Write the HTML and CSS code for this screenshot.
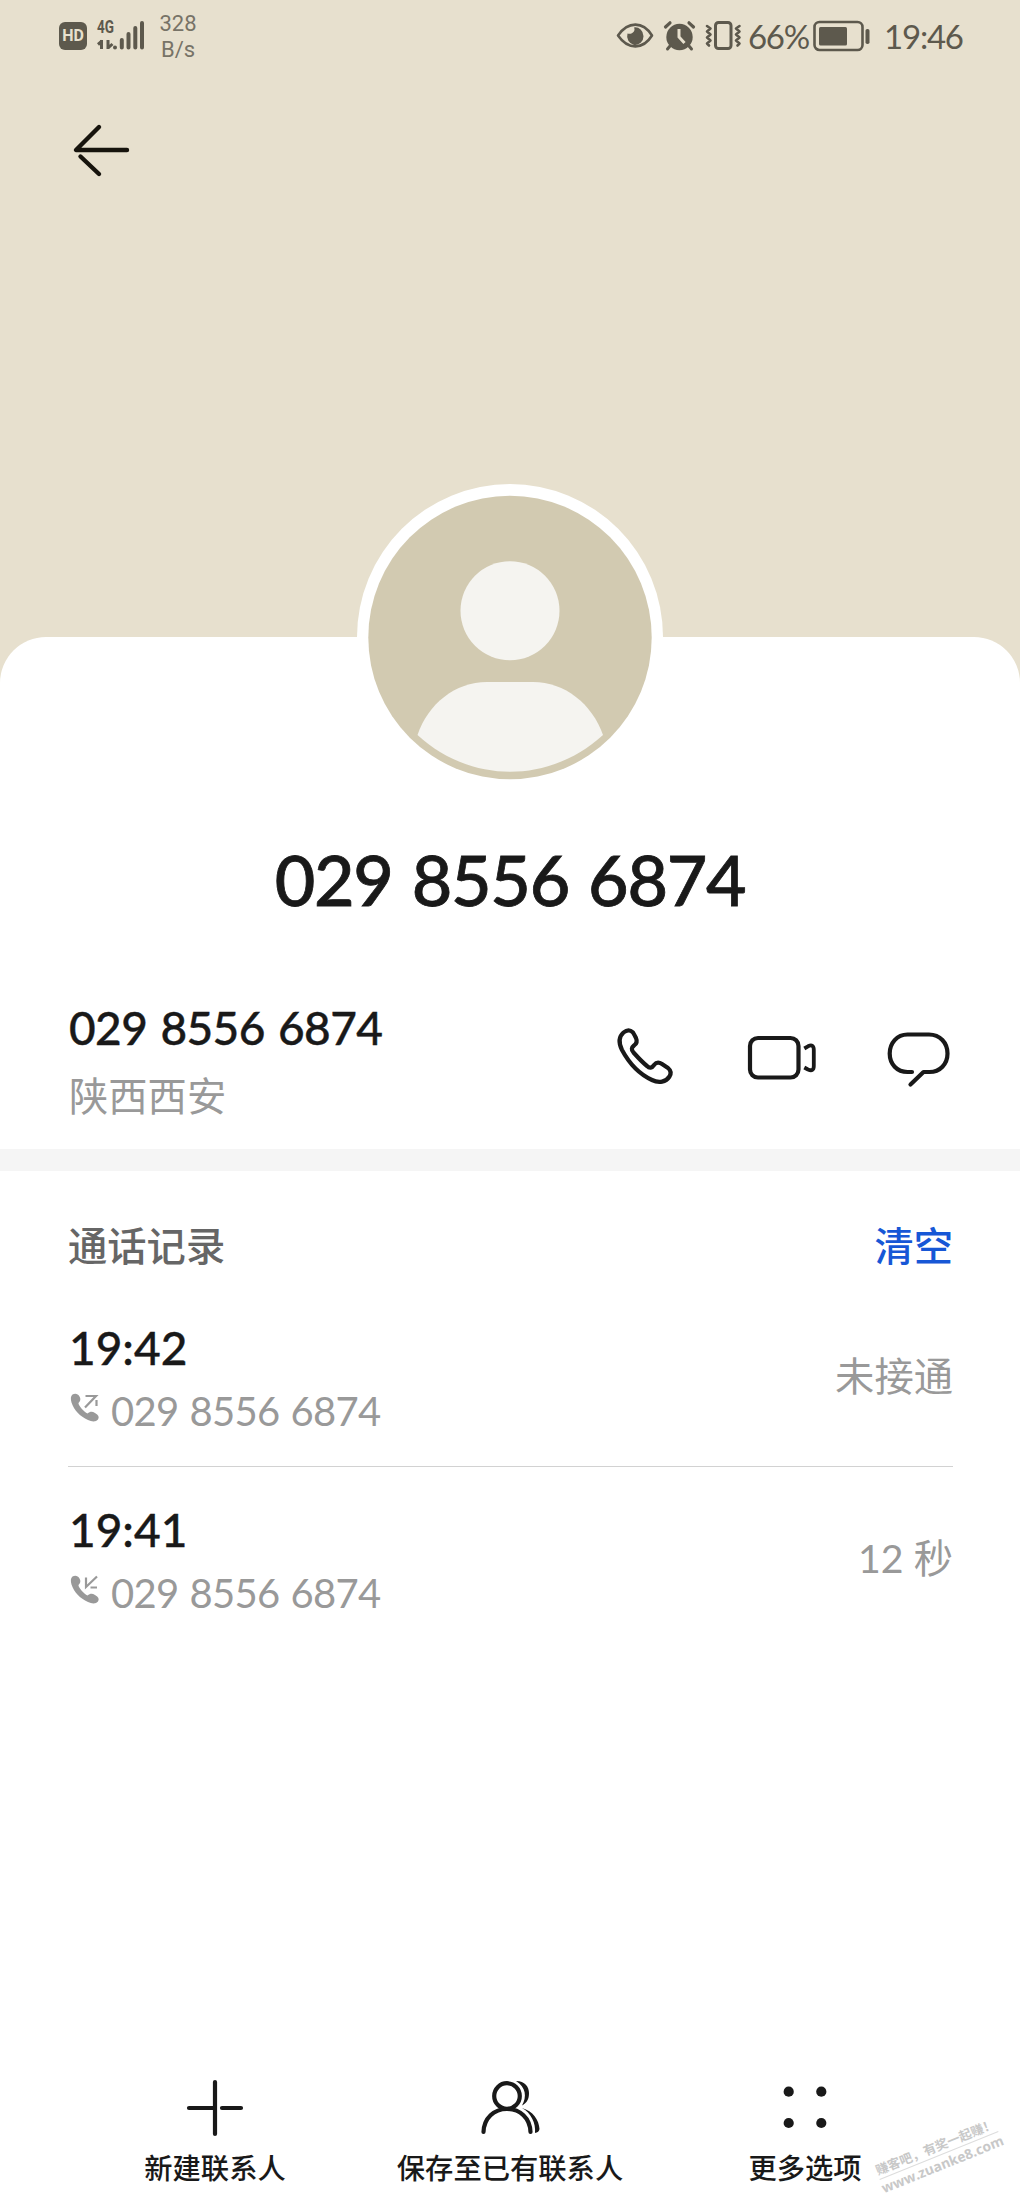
FILE: index.html
```
<!DOCTYPE html>
<html lang="zh-CN">
<head>
<meta charset="utf-8">
<title>029 8556 6874</title>
<link rel="stylesheet" href="styles.css">
</head>
<body>
<div class="screen">
  <header class="hero">
    <div class="status">
      <span class="hd">HD</span>
      <svg class="signal" width="50" height="32" viewBox="0 0 50 32">
        <text x="0" y="14" font-size="18" font-weight="700" textLength="17" lengthAdjust="spacingAndGlyphs">4G</text>
        <path d="M4.500 30V21M5 22L1 25.500M11 30V21M11 29L15.500 25" class="bar thin"/>
        <path d="M18 28.500V28.600M24.800 28.500V21M31.500 28.500V15M38.300 28.500V9M45 28.500V4" class="bar"/>
      </svg>
      <div class="speed"><span>328</span><span>B/s</span></div>
      <svg class="tray" width="126" height="32" viewBox="0 0 126 32">
        <path d="M2 16.500C12 2 27 2 36 16.500C27 31 12 31 2 16.500Z" class="line" stroke-width="2.600"/>
        <path d="M18 8.500C20 12 16 16 11.500 14.500A8.200 8.800 0 1 0 18 8.500Z"/>
        <circle cx="63.500" cy="18" r="13.200"/>
        <path d="M49.500 8L54 3.800M73 3.800L77.500 8" class="line" stroke-width="3.200"/>
        <path d="M54 27L51.500 30M73 27L75.500 30" class="line" stroke-width="3"/>
        <path d="M63 10V18L68.500 24" class="cut"/>
        <rect x="99.500" y="3.500" width="15.500" height="26" rx="3" class="line" stroke-width="3"/>
        <path d="M91 7L94.500 9.500L91 12.500L94.500 15.500L91 18.500L94.500 21.500L91 24.500L93 26.500M123.500 7L120 9.500L123.500 12.500L120 15.500L123.500 18.500L120 21.500L123.500 24.500L121.500 26.500" class="line" stroke-width="2.600"/>
      </svg>
      <span class="pct">66%</span>
      <svg class="battery" width="58" height="32" viewBox="0 0 58 32">
        <rect x="1.500" y="3" width="48" height="28" rx="5" class="line" stroke-width="2.600"/>
        <rect x="6" y="8" width="28" height="18.500" rx="1.500"/>
        <rect x="52.500" y="10" width="4" height="15" rx="1.800"/>
      </svg>
      <span class="clock">19:46</span>
    </div>
    <svg class="back" width="60" height="56" viewBox="0 0 60 56">
      <path d="M26 5L3 28H54M26 52L7.500 34.500"/>
    </svg>
  </header>

  <main class="sheet">
    <svg class="avatar" width="306" height="306" viewBox="0 0 306 306">
      <circle cx="153" cy="153" r="153" fill="#fff"/>
      <circle cx="153" cy="153.500" r="141.700" fill="#d2cab1"/>
      <circle cx="153" cy="126.800" r="49.500" fill="#f5f4f0"/>
      <path d="M60.500 251C71 220 98 198 130 198H176C208 198 235 220 246 251C192 300 114 300 60.500 251Z" fill="#f5f4f0"/>
    </svg>
    <h1 class="title">029 8556 6874</h1>

    <section class="contact">
      <div>
        <div class="number">029 8556 6874</div>
        <div class="place">陕西西安</div>
      </div>
      <div class="actions">
        <svg class="phone" width="60" height="60" viewBox="0 0 60 60">
          <path d="M17 4.500C14 1.500 10.500 2 7.500 4.500C2.500 9 2.500 15 6 22C13 35 23 46 36 52C43 55.500 50 54 53.500 48.500C55.500 45 55 42.500 52 40L46 36C43 34 40 34.500 38 37C36 40 33.500 40.500 31 38C26 34 22 29.500 17.500 24.500C15 21.500 15.500 19.500 18 17.500C21 15.500 21.500 13.500 20 10Q18.500 7 17 4.500Z"/>
        </svg>
        <svg width="72" height="60" viewBox="0 0 72 60">
          <rect x="5" y="8" width="48.500" height="39.500" rx="8"/>
          <path d="M59.300 18.500L63 16.300Q68.800 13.500 68.800 20V36Q68.800 42 63 39.500L59.300 37.500" class="lens"/>
        </svg>
        <svg width="66" height="60" viewBox="0 0 66 60">
          <path d="M26 42H21.500C11 42 3.700 34 3.700 23.500C3.700 13 11 4.500 21.500 4.500H43C54 4.500 61.500 13 61.500 23.500C61.500 34 54 42 43.500 42H37.500L24.500 54.500"/>
        </svg>
      </div>
    </section>

    <section class="log">
      <div class="log-head"><span>通话记录</span><a class="clear">清空</a></div>
      <div class="call">
        <div>
          <div class="time">19:42</div>
          <div class="via">
            <svg width="30" height="30" viewBox="0 0 30 30">
              <path d="M2.500 1.500C5 0 8 .5 9.500 3.500C11 6 10.500 8 8.500 10C8 12 14 19 17.500 20.500C20 18.500 22 18 25 20C28.500 22 29.500 24 28 26.500C26 29 22 29 18 27C10 23.500 4 17 1.500 9.500C.5 6 .5 3 2.500 1.500Z"/>
              <path d="M15.500 3H26L15 14.500M26.500 7V13" class="arrow"/>
            </svg><span>029 8556 6874</span>
          </div>
        </div>
        <div class="result">未接通</div>
      </div>
      <div class="call">
        <div>
          <div class="time">19:41</div>
          <div class="via">
            <svg width="30" height="30" viewBox="0 0 30 30">
              <path d="M2.500 1.500C5 0 8 .5 9.500 3.500C11 6 10.500 8 8.500 10C8 12 14 19 17.500 20.500C20 18.500 22 18 25 20C28.500 22 29.500 24 28 26.500C26 29 22 29 18 27C10 23.500 4 17 1.500 9.500C.5 6 .5 3 2.500 1.500Z"/>
              <path d="M16 2.500V12L27 1.500M20.500 12.500H27" class="arrow"/>
            </svg><span>029 8556 6874</span>
          </div>
        </div>
        <div class="result">12 秒</div>
      </div>
    </section>
  </main>

  <nav class="tools">
    <div class="tool">
      <svg width="60" height="60" viewBox="0 0 60 60"><path d="M30 4V56M4 30H30M37 30H56"/></svg>
      <span>新建联系人</span>
    </div>
    <div class="tool">
      <svg class="people" width="60" height="60" viewBox="0 0 60 60">
        <circle cx="30" cy="18" r="12.800"/>
        <path d="M6.500 54C7 40 17 31 30 31S53 40 53.500 54" />
        <path d="M39 3C48 3 52 9 52 15C52 21 50 25 45 27.500C50 19 49 9 39 3ZM45 30C56 33 62 42 62.500 51Q62 54.500 58 55C59 45 54 35 45 30Z" class="solid"/>
      </svg>
      <span>保存至已有联系人</span>
    </div>
    <div class="tool">
      <svg width="60" height="60" viewBox="0 0 60 60"><g class="solid"><circle cx="13.700" cy="13.700" r="5.100"/><circle cx="46.300" cy="13.700" r="5.100"/><circle cx="13.700" cy="45" r="5.100"/><circle cx="46.300" cy="45" r="5.100"/></g></svg>
      <span>更多选项</span>
    </div>
  </nav>
  <div class="mark"><span class="mark-cn">赚客吧，有奖一起赚！</span><span class="mark-url">www.zuanke8.com</span></div>
</div>
</body>
</html>
```
FILE: styles.css
```
* { box-sizing: border-box; }
body { margin: 0; background: #e7e0ce; }
svg { display: block; flex: none; overflow: visible; }
.screen {
  position: relative;
  width: 1020px;
  height: 2210px;
  overflow: hidden;
  display: flex;
  flex-direction: column;
  color: #191919;
  font-family: Lato, "Noto Sans CJK SC", sans-serif;
  white-space: nowrap;
}
.hero { height: 637px; flex: none; }
.status { display: flex; height: 72px; padding: 19px 0 0 59px; color: #5d594d; }
.status svg { fill: #5d594d; }
.hd {
  width: 28px; height: 28px; margin-top: 3px; border-radius: 6px;
  background: #5d594d; color: #e7e0ce;
  font: 700 16px/28px Roboto, sans-serif; text-align: center;
}
.signal { margin-left: 10px; font-family: Roboto, sans-serif; }
.bar { fill: none; stroke: #5d594d; stroke-width: 4; stroke-linecap: round; }
.thin { stroke-width: 3; stroke-linecap: butt; }
.line { fill: none; stroke: #5d594d; stroke-linecap: round; stroke-linejoin: round; }
.cut { fill: none; stroke: #e7e0ce; stroke-width: 3; }
.speed {
  display: flex; flex-direction: column; align-items: center;
  width: 40px; margin: -8px 0 0 11px; color: #777367;
  font: 400 22px/26px Roboto, sans-serif;
}
.tray { margin-left: 418px; }
.pct { margin-left: 6px; width: 65px; font-size: 33px; line-height: 34px; letter-spacing: -1.300px; }
.clock { margin-left: 13px; font-size: 33px; line-height: 34px; letter-spacing: -1.200px; }
.back { margin: 50px 0 0 73px; fill: none; stroke: #17140d; stroke-width: 4.400; stroke-linecap: round; stroke-linejoin: round; }

.sheet { flex: 1; background: #fff; border-radius: 46px 46px 0 0; display: flex; flex-direction: column; }
.avatar { margin: -153px auto 0; }
.title { margin: 47px 0 0; font-size: 70px; line-height: 84px; font-weight: 500; text-align: center; letter-spacing: -1.300px; word-spacing: 2.800px; -webkit-text-stroke: .8px; }
.contact { display: flex; justify-content: space-between; height: 228px; padding: 79px 68px 0 69px; }
.number { font-size: 46px; line-height: 56px; font-weight: 500; letter-spacing: -.600px; word-spacing: 2.200px; -webkit-text-stroke: .4px; }
.place { margin-top: 12px; font-size: 39.300px; line-height: 56px; color: #999; }
.actions { display: flex; gap: 69px; padding-top: 30px; }
.phone { margin-top: -2px; }
.actions svg, .tools svg { fill: none; stroke: #191919; stroke-width: 4.200; stroke-linecap: round; stroke-linejoin: round; }
.actions .lens { stroke-width: 3.800; stroke-linecap: butt; }

.log { border-top: 22px solid #f5f5f5; padding: 0 67px 0 68px; }
.log-head { display: flex; justify-content: space-between; padding-top: 47px; font-size: 39.300px; line-height: 56px; color: #666; font-weight: 500; }
.clear { color: #1757d6; }
.call { display: flex; justify-content: space-between; height: 192px; padding-top: 46px; }
.call + .call { border-top: 1px solid #d2d2d2; padding-top: 35px; }
.time { padding-left: 1px; font-size: 46px; line-height: 56px; font-weight: 500; -webkit-text-stroke: .4px; }
.via { display: flex; gap: 11px; margin-top: 7px; padding-left: 2px; font-size: 40px; line-height: 56px; color: #999; letter-spacing: -.700px; word-spacing: 1.400px; }
.via svg { margin-top: 10px; fill: #999; }
.via .arrow { fill: none; stroke: #999; stroke-width: 2.200; }
.result { padding-top: 28px; font-size: 39.300px; line-height: 56px; color: #999; }

.tools { display: flex; justify-content: center; height: 136px; flex: none; background: #fff; padding-top: 4px; }
.tool { width: 295px; display: flex; flex-direction: column; align-items: center; gap: 10px; font-size: 28.300px; line-height: 40px; font-weight: 500; }
.people { margin-right: 6px; }
.tools .solid { fill: #191919; stroke: none; }
.mark { position: absolute; left: 874px; top: 2137px; width: 130px; display: flex; flex-direction: column; align-items: center; color: #c8c8c8; transform: rotate(-22deg); font-weight: 700; }
.mark-cn { font-size: 12.800px; line-height: 18px; border-bottom: 1px solid #ddd; }
.mark-url { font-size: 13.800px; line-height: 18px; font-family: "Open Sans", sans-serif; }
```
